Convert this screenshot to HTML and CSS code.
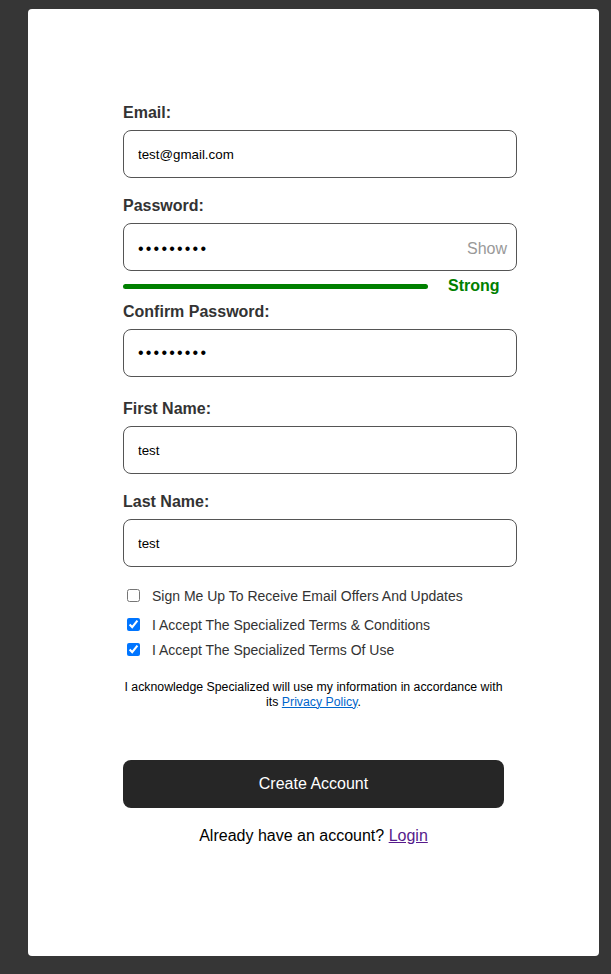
FILE: index.html
```html
<!DOCTYPE html>
<html lang="en">
<head>
<meta charset="utf-8">
<title>Create Account</title>
<link rel="stylesheet" href="styles.css">
</head>
<body>
<div class="card">
  <form class="form">
    <div class="field field-email">
      <label class="label" for="email">Email:</label>
      <input class="input" id="email" type="text" value="test@gmail.com">
    </div>
    <div class="field field-password">
      <label class="label" for="password">Password:</label>
      <div class="input-box">
        <input class="input-inner password" id="password" type="password" value="testtest1">
        <span class="show">Show</span>
      </div>
      <div class="strength">
        <div class="strength-bar"></div>
        <span class="strength-text">Strong</span>
      </div>
    </div>
    <div class="field field-confirm">
      <label class="label" for="confirm">Confirm Password:</label>
      <input class="input password" id="confirm" type="password" value="testtest1">
    </div>
    <div class="field field-first">
      <label class="label" for="first">First Name:</label>
      <input class="input" id="first" type="text" value="test">
    </div>
    <div class="field field-last">
      <label class="label" for="last">Last Name:</label>
      <input class="input" id="last" type="text" value="test">
    </div>
    <div class="checks">
      <label class="check check-first"><input type="checkbox"><span class="check-text">Sign Me Up To Receive Email Offers And Updates</span></label>
      <label class="check check-second"><input type="checkbox" checked><span class="check-text">I Accept The Specialized Terms &amp; Conditions</span></label>
      <label class="check"><input type="checkbox" checked><span class="check-text">I Accept The Specialized Terms Of Use</span></label>
    </div>
    <p class="ack">I acknowledge Specialized will use my information in accordance with its <a class="ack-link" href="#">Privacy Policy</a>.</p>
    <button class="submit" type="button">Create Account</button>
    <p class="login">Already have an account? <a class="login-link" href="#">Login</a></p>
  </form>
</div>
</body>
</html>
```

FILE: styles.css
```css
html, body {
  margin: 0;
  padding: 0;
}
body {
  background: #363636;
  font-family: "Liberation Sans", Arial, sans-serif;
  padding: 9px 12px 0 28px;
  min-height: 974px;
  box-sizing: border-box;
}
.card {
  background: #ffffff;
  border-radius: 4px;
  height: 947px;
  box-sizing: border-box;
  padding-top: 95px;
}
.form {
  width: 381px;
  margin: 0 auto;
}
.field {
  margin-bottom: 19px;
}
.field-password {
  margin-bottom: 8px;
}
.field-confirm {
  margin-bottom: 23px;
}
.field-last {
  margin-bottom: 0;
}
.label {
  display: block;
  font-size: 16px;
  font-weight: bold;
  line-height: 18px;
  color: #333333;
  margin-bottom: 8px;
}
.input {
  display: block;
  box-sizing: border-box;
  width: 394px;
  height: 48px;
  border: 1px solid #555555;
  border-radius: 8px;
  padding: 0 14px;
  font-family: "Liberation Sans", Arial, sans-serif;
  font-size: 13.333px;
  color: #000000;
  background: #ffffff;
  outline: none;
}
.input-box {
  display: flex;
  align-items: center;
  box-sizing: border-box;
  width: 394px;
  height: 48px;
  border: 1px solid #555555;
  border-radius: 8px;
  padding: 4px 9px 0 14px;
  background: #ffffff;
}
.input-inner {
  flex: 1;
  min-width: 0;
  border: none;
  padding: 0;
  height: 100%;
  font-family: "Liberation Sans", Arial, sans-serif;
  font-size: 13.333px;
  color: #000000;
  background: transparent;
  outline: none;
}
.password {
  font-size: 16px;
  letter-spacing: 2.2px;
}
.show {
  font-size: 16px;
  color: #999999;
}
.strength {
  display: flex;
  align-items: center;
  margin-top: 6px;
  height: 18px;
}
.strength-bar {
  width: 305px;
  height: 5px;
  border-radius: 3px;
  background: #008000;
}
.strength-text {
  margin-left: 20px;
  font-size: 16px;
  font-weight: bold;
  line-height: 18px;
  color: #008000;
}
.checks {
  margin-top: 19px;
}
.check {
  display: flex;
  align-items: center;
  font-size: 14px;
  color: #333333;
  margin-bottom: 6px;
}
.check input {
  margin: 3px 3px 3px 4px;
  width: 13px;
  height: 13px;
}
.check-first {
  margin-bottom: 10px;
}
.check-text {
  margin-left: 9px;
  line-height: 16px;
}
.ack {
  margin: 21px 0 0;
  font-size: 12.3px;
  line-height: 14.5px;
  color: #000000;
  text-align: center;
}
.ack-link {
  color: #0066cc;
}
.submit {
  display: block;
  width: 381px;
  height: 48px;
  margin-top: 51px;
  border: none;
  border-radius: 8px;
  background: #262626;
  color: #ffffff;
  font-family: "Liberation Sans", Arial, sans-serif;
  font-size: 16px;
  cursor: pointer;
}
.login {
  margin: 19px 0 0;
  font-size: 16px;
  line-height: 18px;
  color: #000000;
  text-align: center;
}
.login-link {
  color: #551a8b;
}
```
